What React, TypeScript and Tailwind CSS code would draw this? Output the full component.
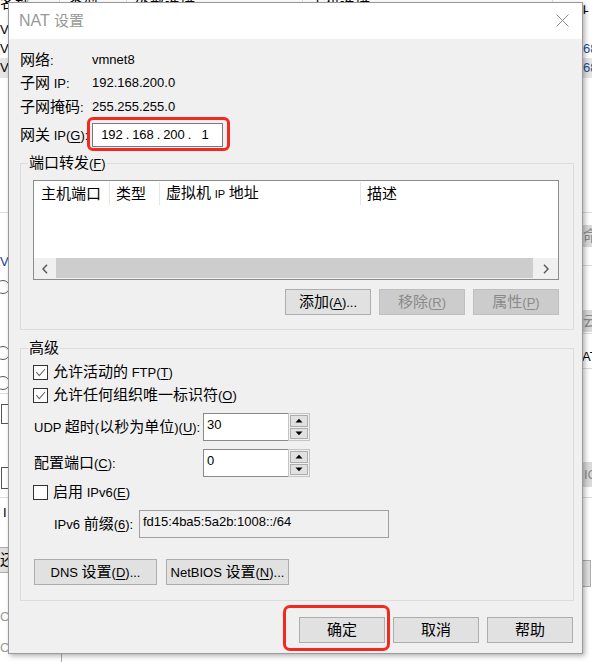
import React from "react";

const CJK_RE = /[\u2e80-\u9fff\uf900-\ufaff\uff00-\uffef\u3000-\u303f]/;

function Tx({ s, big = "text-[15px]" }: { s: string; big?: string }) {
  const runs: { c: boolean; t: string }[] = [];
  for (const ch of s) {
    const c = CJK_RE.test(ch);
    const last = runs[runs.length - 1];
    if (last && last.c === c) last.t += ch;
    else runs.push({ c, t: ch });
  }
  return (
    <>
      {runs.map((r, i) =>
        r.c ? (
          <span key={i} className={big}>
            {r.t}
          </span>
        ) : (
          <span key={i}>{r.t}</span>
        )
      )}
    </>
  );
}

function L({ s }: { s: string }) {
  const i = s.indexOf("&");
  if (i < 0) return <Tx s={s} />;
  return (
    <>
      <Tx s={s.slice(0, i)} />
      <span className="underline decoration-1 underline-offset-[2px]">{s[i + 1]}</span>
      <Tx s={s.slice(i + 2)} />
    </>
  );
}

function Btn({
  w,
  disabled,
  children,
}: {
  w: string;
  disabled?: boolean;
  children: React.ReactNode;
}) {
  return (
    <button
      type="button"
      className={`${w} h-[26px] flex items-center justify-center border whitespace-nowrap ${
        disabled
          ? "bg-[#cccccc] border-[#bfbfbf] text-[#8a8a8a]"
          : "bg-[#e1e1e1] border-[#adadad] text-black"
      }`}
    >
      <span className="whitespace-pre">{children}</span>
    </button>
  );
}

function Check({ checked }: { checked?: boolean }) {
  return (
    <div className="w-[15px] h-[15px] shrink-0 border border-[#333333] bg-white flex items-center justify-center">
      {checked && (
        <svg width="13" height="13" viewBox="0 0 13 13">
          <path d="M2.3 6.2 L5.3 9.6 L11 3" stroke="#6a6a6a" strokeWidth="1.1" fill="none" />
        </svg>
      )}
    </div>
  );
}

function Spin({ v }: { v: string }) {
  return (
    <div className="flex h-[28px]">
      <div className="w-[85px] h-full bg-white border border-r-0 border-[#8a8a8a] pl-[3px] pt-[3px] leading-[16px]">
        {v}
      </div>
      <div className="w-[22px] h-full border border-[#c4c4c4] bg-[#f0f0f0] p-[1px] flex flex-col gap-[1px]">
        <div className="flex-1 border border-[#adadad] bg-[#e1e1e1] flex items-center justify-center">
          <svg width="8" height="5" viewBox="0 0 8 5">
            <path d="M0.5 4.5 L4 0.8 L7.5 4.5 Z" fill="#000" />
          </svg>
        </div>
        <div className="flex-1 border border-[#adadad] bg-[#e1e1e1] flex items-center justify-center">
          <svg width="8" height="5" viewBox="0 0 8 5">
            <path d="M0.5 0.5 L4 4.2 L7.5 0.5 Z" fill="#000" />
          </svg>
        </div>
      </div>
    </div>
  );
}

function Background() {
  return (
    <>
      {/* header row of the window behind (only its lower edge shows) */}
      <div className="absolute left-0 top-0 w-[592px] h-[14px] overflow-hidden">
        <div className="absolute left-0 top-[-7px] h-[20px] w-[600px] flex items-center text-black">
          <div className="w-[60px] h-full border-r border-[#e0e0e0] flex items-center">
            <Tx s="名称" />
          </div>
          <div className="w-[67px] h-full border-r border-[#e0e0e0] pl-[8px] flex items-center">
            <Tx s="类型" />
          </div>
          <div className="w-[176px] h-full border-r border-[#e0e0e0] pl-[8px] flex items-center">
            <Tx s="外部连接" />
          </div>
          <div className="w-[250px] h-full border-r border-[#e0e0e0] pl-[7px] flex items-center">
            <Tx s="主机连接" />
          </div>
          <div className="flex-1 h-full pl-[6px] flex items-center">
            <Tx s="子网地址" />
          </div>
        </div>
      </div>

      {/* left strip */}
      <div className="absolute left-0 top-[14px] w-[8px] h-[648px] overflow-hidden">
        <div className="absolute left-0 top-[6px] h-[20px] flex items-center">V</div>
        <div className="absolute left-0 top-[25px] h-[20px] flex items-center">V</div>
        <div className="absolute left-0 top-[44px] w-[8px] h-[20px] bg-[#e5e5e5] flex items-center">V</div>
        <div className="absolute left-0 top-[198px] w-[8px] border-t border-[#dcdcdc]" />
        <div className="absolute left-0 top-[238px] h-[20px] flex items-center text-[#1d3f8f]">V</div>
        <div className="absolute left-[-4px] top-[266px] w-[14px] h-[14px] rounded-full border border-[#555]" />
        <div className="absolute left-[-4px] top-[332px] w-[14px] h-[14px] rounded-full border border-[#555]" />
        <div className="absolute left-[-4px] top-[362px] w-[14px] h-[14px] rounded-full border border-[#555]" />
        <div className="absolute left-0 top-[379px] w-[8px] border-t border-[#dcdcdc]" />
        <div className="absolute left-[1px] top-[390px] w-[14px] h-[20px] border border-[#555]" />
        <div className="absolute left-[1px] top-[453px] w-[14px] h-[22px] border border-[#555]" />
        <div className="absolute left-0 top-[483px] w-[8px] border-t border-[#dcdcdc]" />
        <div className="absolute left-[3px] top-[489px] h-[20px] flex items-center">I</div>
        <div className="absolute left-[-2px] top-[533px] w-[20px] h-[26px] bg-[#e1e1e1] border border-[#adadad] flex items-center pl-[1px]">
          <Tx s="还" />
        </div>
        <div className="absolute left-0 top-[593px] h-[20px] flex items-center text-[#9a9a9a]">C</div>
        <div className="absolute left-0 top-[624px] h-[20px] flex items-center text-[#9a9a9a]">C</div>
      </div>

      {/* bottom strip */}
      <div className="absolute left-0 top-[654px] w-[592px] h-[8px] overflow-hidden">
        <div className="absolute left-0 top-[-16px] h-[20px] flex items-center text-[#b0b0b0]">Ctrl+V</div>
        <div className="absolute left-[61px] top-0 h-[8px] border-l border-[#8fb5b0]" />
      </div>

      {/* right strip */}
      <div className="absolute left-[583px] top-[14px] w-[9px] h-[640px] overflow-hidden">
        <div className="absolute left-0 top-[25px] h-[20px] flex items-center text-[#1d4f91]">68</div>
        <div className="absolute left-0 top-[44px] w-[9px] h-[20px] bg-[#e5e5e5] flex items-center text-[#1d4f91]">
          68
        </div>
        <div className="absolute left-0 top-[198px] w-[9px] border-t border-[#dcdcdc]" />
        <div className="absolute left-0 top-[211px] w-[9px] h-[22px] bg-[#dadada] flex items-center text-[#8a8a8a]">
          <Tx s="命" />
        </div>
        <div className="absolute left-0 top-[251px] w-[9px] border-t border-[#dcdcdc]" />
        <div className="absolute left-0 top-[296px] w-[9px] h-[22px] bg-[#dadada] flex items-center text-[#8a8a8a]">
          <Tx s="云" />
        </div>
        <div className="absolute left-0 top-[319px] w-[9px] border-t border-[#dcdcdc]" />
        <div className="absolute left-[-1px] top-[333px] h-[20px] flex items-center">AT</div>
        <div className="absolute left-0 top-[354px] w-[9px] border-t border-[#dcdcdc]" />
        <div className="absolute left-0 top-[448px] w-[9px] h-[25px] bg-[#dadada] flex items-center pl-[1px] text-[#8a8a8a]">
          IC
        </div>
        <div className="absolute left-0 top-[483px] w-[9px] border-t border-[#dcdcdc]" />
        <div className="absolute left-[-6px] top-[546px] w-[14px] h-[27px] bg-[#e1e1e1] border border-[#adadad]" />
      </div>
    </>
  );
}

export default function App() {
  return (
    <div className="relative w-[592px] h-[662px] overflow-hidden bg-white font-['Liberation_Sans','Noto_Sans_CJK_SC',sans-serif] text-[13px] leading-[20px] text-black">
      <Background />
      <div className="absolute left-[8px] top-[2px] w-[575px] h-[652px] border border-[#9a9a9a] bg-[#f0f0f0] shadow-[2px_2px_5px_rgba(0,0,0,0.3)] flex flex-col">
        {/* title bar */}
        <div className="h-[36px] shrink-0 bg-white flex items-center justify-between pl-[10px] pr-[13px] pb-[1px]">
          <span className="text-[#999999] text-[16px] whitespace-pre">
            <Tx s="NAT 设置" />
          </span>
          <svg width="13" height="13" viewBox="0 0 13 13">
            <path d="M0.5 0.5 L12.5 12.5 M12.5 0.5 L0.5 12.5" stroke="#8a8a8a" strokeWidth="1" />
          </svg>
        </div>

        {/* body */}
        <div className="flex flex-col pl-[11px] pr-[8px] pt-[11px]">
          <div className="flex h-[20px] items-center">
            <div className="w-[72px]">
              <Tx s="网络:" />
            </div>
            <div>vmnet8</div>
          </div>
          <div className="flex h-[20px] items-center mt-[3px]">
            <div className="w-[72px] whitespace-pre">
              <Tx s="子网 IP:" />
            </div>
            <div>192.168.200.0</div>
          </div>
          <div className="flex h-[20px] items-center mt-[4px]">
            <div className="w-[72px]">
              <Tx s="子网掩码:" />
            </div>
            <div>255.255.255.0</div>
          </div>
          <div className="flex h-[24px] items-center mt-[6px]">
            <div className="w-[72px] whitespace-pre">
              <L s="网关 IP(&G):" />
            </div>
            <div className="relative w-[131px] h-[24px]">
              <div className="w-full h-full border border-[#7a7a7a] bg-white flex items-center pl-[7px]">
                <span className="w-[24px] text-center">192</span>
                <span className="w-[7px] text-center">.</span>
                <span className="w-[24px] text-center">168</span>
                <span className="w-[7px] text-center">.</span>
                <span className="w-[24px] text-center">200</span>
                <span className="w-[7px] text-center">.</span>
                <span className="w-[24px] text-center">1</span>
              </div>
              <div className="pointer-events-none absolute left-[-5px] top-[-6px] right-[-7px] bottom-[-4px] rounded-[6px] border-[3px] border-[#f3281f]" />
            </div>
          </div>

          {/* port forwarding group */}
          <fieldset className="mt-[6px] w-[554px] border border-[#dcdcdc] pb-[14px]">
            <legend className="ml-[7px] px-[1px] leading-[20px]">
              <L s="端口转发(&F)" />
            </legend>
            <div className="ml-[12px] mt-[6px] w-[526px] h-[100px] border border-[#8c8c8c] bg-white flex flex-col">
              <div className="h-[25px] shrink-0 flex">
                <div className="w-[76px] my-[1px] pl-[7px] flex items-center border-r border-[#e5e5e5]">
                  <Tx s="主机端口" />
                </div>
                <div className="w-[50px] my-[1px] pl-[6px] flex items-center border-r border-[#e5e5e5]">
                  <Tx s="类型" />
                </div>
                <div className="w-[201px] my-[1px] pl-[6px] flex items-center border-r border-[#e5e5e5]">
                  <span className="whitespace-pre">
                    <Tx s="虚拟机 " />
                    <span className="text-[11px]">IP</span>
                    <Tx s=" 地址" />
                  </span>
                </div>
                <div className="flex-1 my-[1px] pl-[6px] flex items-center">
                  <Tx s="描述" />
                </div>
              </div>
              <div className="mt-auto h-[21px] flex bg-[#f0f0f0]">
                <div className="w-[22px] flex items-center justify-center">
                  <svg width="6" height="10" viewBox="0 0 6 10">
                    <path d="M5 0.8 L1 5 L5 9.2" stroke="#5a5a5a" strokeWidth="1.5" fill="none" />
                  </svg>
                </div>
                <div className="flex-1 mb-[1px] bg-[#cdcdcd]" />
                <div className="w-[25px] flex items-center justify-center pl-[1px]">
                  <svg width="6" height="10" viewBox="0 0 6 10">
                    <path d="M1 0.8 L5 5 L1 9.2" stroke="#5a5a5a" strokeWidth="1.5" fill="none" />
                  </svg>
                </div>
              </div>
            </div>
            <div className="ml-[12px] mt-[9px] w-[526px] flex justify-end gap-[8px]">
              <Btn w="w-[86px]">
                <L s="添加(&A)..." />
              </Btn>
              <Btn w="w-[86px]" disabled>
                <L s="移除(&R)" />
              </Btn>
              <Btn w="w-[86px]" disabled>
                <L s="属性(&P)" />
              </Btn>
            </div>
          </fieldset>

          {/* advanced group */}
          <fieldset className="mt-[8px] w-[554px] border border-[#dcdcdc] pb-[15px]">
            <legend className="ml-[7px] px-[1px] leading-[20px]">
              <Tx s="高级" />
            </legend>
            <div className="pl-[12px] pt-[6px] flex flex-col">
              <div className="flex h-[15px] items-center gap-[5px]">
                <Check checked />
                <span className="whitespace-pre">
                  <L s="允许活动的 FTP(&T)" />
                </span>
              </div>
              <div className="flex h-[15px] items-center gap-[5px] mt-[8px]">
                <Check checked />
                <span>
                  <L s="允许任何组织唯一标识符(&O)" />
                </span>
              </div>
              <div className="flex h-[28px] items-center mt-[10px]">
                <div className="ml-[1px] w-[169px] whitespace-pre">
                  <L s="UDP 超时(以秒为单位)(&U):" />
                </div>
                <Spin v="30" />
              </div>
              <div className="flex h-[28px] items-center mt-[8px]">
                <div className="ml-[1px] w-[169px]">
                  <L s="配置端口(&C):" />
                </div>
                <Spin v="0" />
              </div>
              <div className="flex h-[15px] items-center gap-[5px] mt-[8px]">
                <Check />
                <span className="whitespace-pre">
                  <L s="启用 IPv6(&E)" />
                </span>
              </div>
              <div className="flex h-[28px] items-center mt-[10px]">
                <div className="ml-[21px] w-[85px] whitespace-pre">
                  <L s="IPv6 前缀(&6):" />
                </div>
                <div className="w-[250px] h-[28px] border border-[#a0a0a0] bg-[#f0f0f0] pl-[3px] pt-[2px] leading-[18px]">
                  fd15:4ba5:5a2b:1008::/64
                </div>
              </div>
              <div className="flex ml-[1px] mt-[21px] gap-[9px]">
                <Btn w="w-[123px]">
                  <L s="DNS 设置(&D)..." />
                </Btn>
                <Btn w="w-[123px]">
                  <L s="NetBIOS 设置(&N)..." />
                </Btn>
              </div>
            </div>
          </fieldset>

          {/* dialog buttons */}
          <div className="mt-[16px] w-[554px] pr-[1px] flex justify-end gap-[8px]">
            <div className="relative">
              <Btn w="w-[86px]">
                <Tx s="确定" />
              </Btn>
              <div className="pointer-events-none absolute left-[-16px] top-[-12px] right-[-5px] bottom-[-8px] rounded-[7px] border-[3px] border-[#f3281f]" />
            </div>
            <Btn w="w-[86px]">
              <Tx s="取消" />
            </Btn>
            <Btn w="w-[86px]">
              <Tx s="帮助" />
            </Btn>
          </div>
        </div>
      </div>
    </div>
  );
}
